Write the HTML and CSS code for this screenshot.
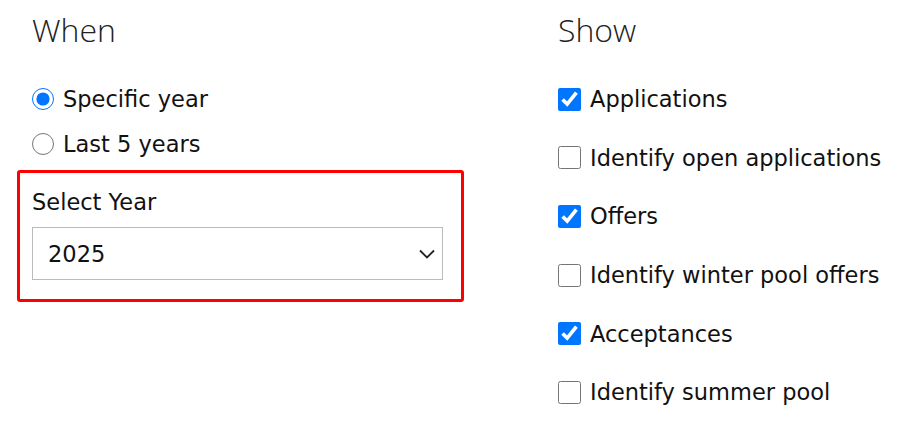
FILE: index.html
```html
<!DOCTYPE html>
<html>
<head>
  <meta charset="utf-8">
  <title>Report options</title>
  <link rel="stylesheet" href="styles.css">
</head>
<body>

<div class="options">

  <!-- when column -->
  <div class="col col-when">
    <h2 class="heading">When</h2>

    <div class="radios">
      <label class="opt"><input type="radio" name="when" checked> Specific year</label>
      <label class="opt"><input type="radio" name="when"> Last 5 years</label>
    </div>

    <div class="year-box">
      <div class="year-label">Select Year</div>
      <div class="year-select">
        <span>2025</span>
        <svg class="chev" width="16" height="10" viewBox="0 0 16 10"><path d="M1 1.5 L8 8.5 L15 1.5" fill="none" stroke="#222" stroke-width="1.8"/></svg>
      </div>
    </div>
  </div>

  <!-- show column -->
  <div class="col col-show">
    <h2 class="heading">Show</h2>

    <div class="checks">
      <label class="opt"><input type="checkbox" checked> Applications</label>
      <label class="opt"><input type="checkbox"> Identify open applications</label>
      <label class="opt"><input type="checkbox" checked> Offers</label>
      <label class="opt"><input type="checkbox"> Identify winter pool offers</label>
      <label class="opt"><input type="checkbox" checked> Acceptances</label>
      <label class="opt"><input type="checkbox"> Identify summer pool</label>
    </div>
  </div>

</div>

</body>
</html>
```

FILE: styles.css
```css
/** whole page **/
  body {
    margin: 0;
    background: #fff;
    color: #111;
    font-family: "DejaVu Sans", Verdana, sans-serif;
    font-size: 22.5px;
  }

  .options {
    display: flex;
    padding: 0 0 0 32px;
  }

  .col-when {
    width: 526px;
  }

/** section titles **/
  .heading {
    margin: 10px 0 0 0;
    font-family: "Open Sans", sans-serif;
    font-weight: 300;
    font-size: 32px;
    line-height: 40px;
    color: #222;
  }

/** option rows **/
  .opt {
    display: flex;
    align-items: center;
    gap: 9px;
    line-height: 26px;
  }

  .opt input {
    margin: 0;
    width: 23px;
    height: 23px;
  }

  .radios {
    margin-top: 36px;
    display: flex;
    flex-direction: column;
    gap: 19px;
  }

  .radios .opt input {
    width: 22px;
    height: 22px;
  }

  .checks {
    margin-top: 36px;
    display: flex;
    flex-direction: column;
    gap: 32.7px;
  }

/** the red year box **/
  .year-box {
    box-sizing: border-box;
    margin: 13px 0 0 -15px;
    width: 447px;
    height: 132px;
    border: 3px solid #ff0000;
    border-radius: 3px;
    padding: 15px 18px 0 12px;
  }

  .year-label {
    line-height: 28px;
  }

  .year-select {
    margin-top: 11px;
    height: 51px;
    border: 1px solid #bbb;
    display: flex;
    align-items: center;
    justify-content: space-between;
    padding: 0 7px 0 15px;
  }
```
